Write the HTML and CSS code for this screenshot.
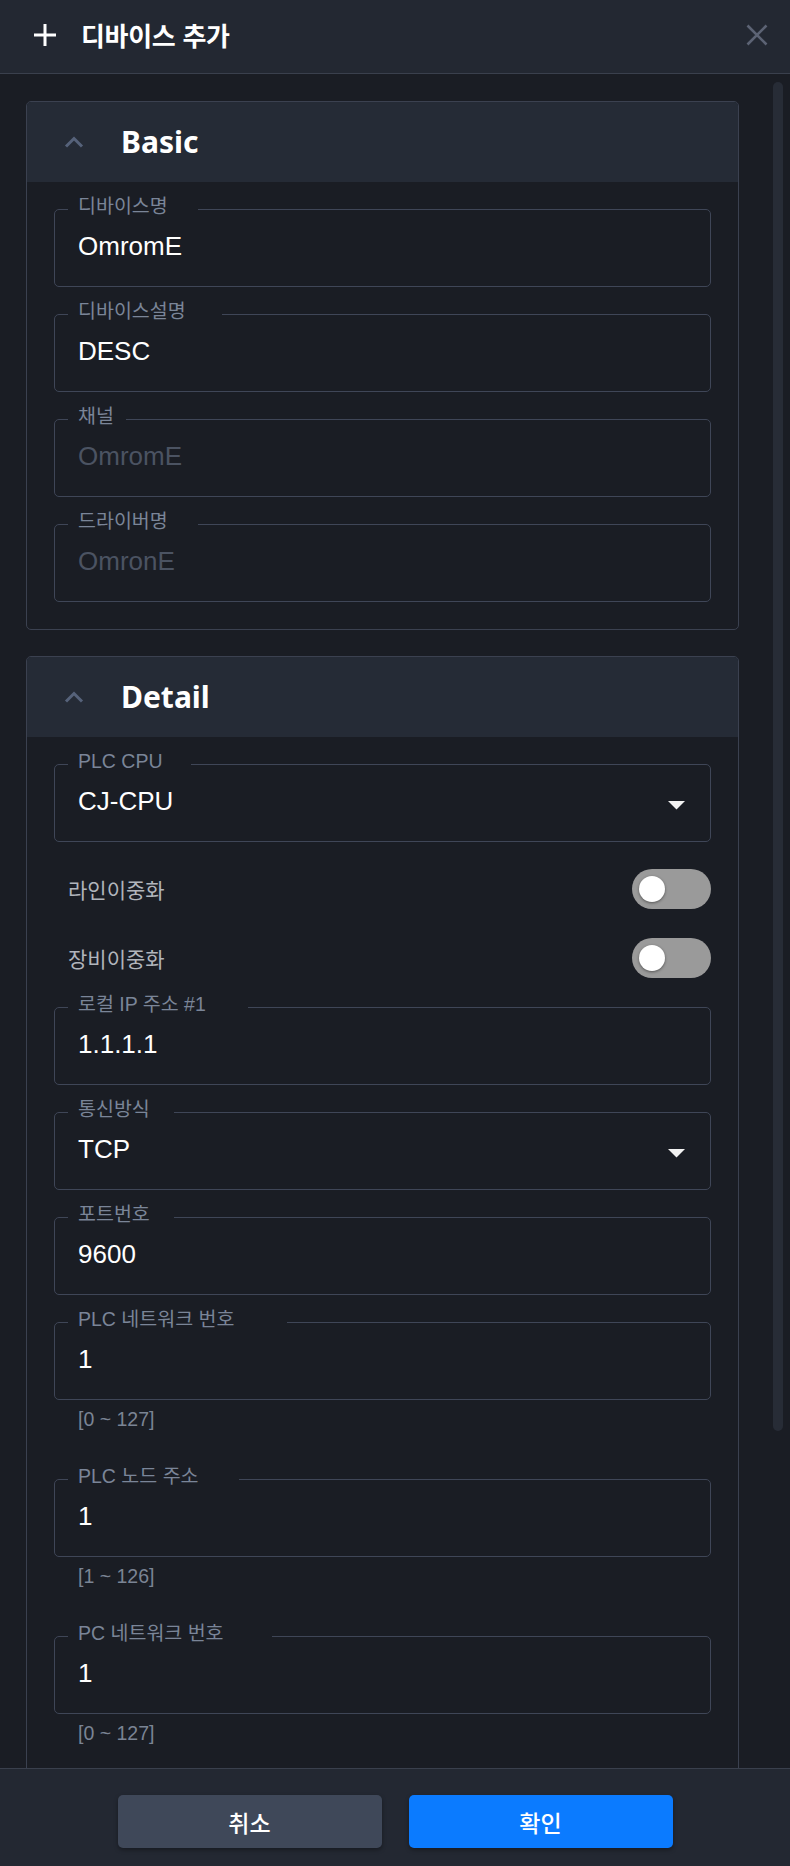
FILE: index.html
```html
<!DOCTYPE html>
<html lang="ko">
<head>
<meta charset="utf-8">
<title>디바이스 추가</title>
<link rel="stylesheet" href="styles.css">
</head>
<body>
<div class="dialog">
  <header class="topbar">
    <svg class="plus" width="22" height="22" viewBox="0 0 22 22"><path d="M11 0V22M0 11H22" stroke="#ffffff" stroke-width="3" fill="none"/></svg>
    <h1 class="title">디바이스 추가</h1>
    <svg class="close" width="22" height="22" viewBox="0 0 22 22"><path d="M1.5 1.5L20.5 20.5M20.5 1.5L1.5 20.5" stroke="#5c6374" stroke-width="2.6" fill="none"/></svg>
  </header>

  <main class="content">
    <section class="card">
      <div class="card-head">
        <svg class="chev" width="20" height="12" viewBox="0 0 20 12"><path d="M2 10.5L10 2.5L18 10.5" stroke="#56627a" stroke-width="3" fill="none"/></svg>
        <h2 class="card-title">Basic</h2>
      </div>
      <div class="card-body">
        <div class="fw">
          <fieldset class="field"><legend><span>디바이스명</span></legend><div class="value">OmromE</div></fieldset>
          <label class="flabel">디바이스명</label>
        </div>
        <div class="fw">
          <fieldset class="field"><legend><span>디바이스설명</span></legend><div class="value">DESC</div></fieldset>
          <label class="flabel">디바이스설명</label>
        </div>
        <div class="fw">
          <fieldset class="field"><legend><span>채널</span></legend><div class="value disabled">OmromE</div></fieldset>
          <label class="flabel">채널</label>
        </div>
        <div class="fw">
          <fieldset class="field"><legend><span>드라이버명</span></legend><div class="value disabled">OmronE</div></fieldset>
          <label class="flabel">드라이버명</label>
        </div>
      </div>
    </section>

    <section class="card">
      <div class="card-head">
        <svg class="chev" width="20" height="12" viewBox="0 0 20 12"><path d="M2 10.5L10 2.5L18 10.5" stroke="#56627a" stroke-width="3" fill="none"/></svg>
        <h2 class="card-title">Detail</h2>
      </div>
      <div class="card-body">
        <div class="fw">
          <fieldset class="field"><legend><span>PLC CPU</span></legend>
            <div class="value select"><span>CJ-CPU</span><svg class="caret" width="17" height="9" viewBox="0 0 17 9"><path d="M0 0H17L8.5 8.5Z" fill="#f2f2f2"/></svg></div>
          </fieldset>
          <label class="flabel">PLC CPU</label>
        </div>
        <div class="trow">
          <span class="tlabel">라인이중화</span>
          <span class="toggle"><span class="knob"></span></span>
        </div>
        <div class="trow">
          <span class="tlabel">장비이중화</span>
          <span class="toggle"><span class="knob"></span></span>
        </div>
        <div class="fw">
          <fieldset class="field"><legend><span>로컬 IP 주소 #1</span></legend><div class="value">1.1.1.1</div></fieldset>
          <label class="flabel">로컬 IP 주소 #1</label>
        </div>
        <div class="fw">
          <fieldset class="field"><legend><span>통신방식</span></legend>
            <div class="value select"><span>TCP</span><svg class="caret" width="17" height="9" viewBox="0 0 17 9"><path d="M0 0H17L8.5 8.5Z" fill="#f2f2f2"/></svg></div>
          </fieldset>
          <label class="flabel">통신방식</label>
        </div>
        <div class="fw">
          <fieldset class="field"><legend><span>포트번호</span></legend><div class="value">9600</div></fieldset>
          <label class="flabel">포트번호</label>
        </div>
        <div class="fw">
          <fieldset class="field"><legend><span>PLC 네트워크 번호</span></legend><div class="value">1</div></fieldset>
          <label class="flabel">PLC 네트워크 번호</label>
          <p class="helper">[0 ~ 127]</p>
        </div>
        <div class="fw">
          <fieldset class="field"><legend><span>PLC 노드 주소</span></legend><div class="value">1</div></fieldset>
          <label class="flabel">PLC 노드 주소</label>
          <p class="helper">[1 ~ 126]</p>
        </div>
        <div class="fw">
          <fieldset class="field"><legend><span>PC 네트워크 번호</span></legend><div class="value">1</div></fieldset>
          <label class="flabel">PC 네트워크 번호</label>
          <p class="helper">[0 ~ 127]</p>
        </div>
      </div>
    </section>
    <div class="thumb"></div>
  </main>

  <footer class="actions">
    <button class="btn cancel">취소</button>
    <button class="btn ok">확인</button>
  </footer>
</div>
</body>
</html>
```

FILE: styles.css
```css
html, body {
  margin: 0;
  padding: 0;
  background: #1a1d24;
}
body {
  width: 790px;
  height: 1866px;
  overflow: hidden;
  font-family: "Liberation Sans", "Noto Sans CJK KR", sans-serif;
}
.dialog {
  display: flex;
  flex-direction: column;
  height: 1866px;
}
.topbar {
  flex: none;
  box-sizing: border-box;
  height: 74px;
  border-bottom: 1px solid #3a404d;
  background: #232832;
  display: flex;
  align-items: center;
  padding: 0 22px 3px 34px;
}
.plus { flex: none; }
.title {
  margin: 0 0 0 25px;
  flex: 1;
  font-family: "Noto Sans CJK KR", sans-serif;
  font-weight: 700;
  font-size: 26px;
  letter-spacing: -0.3px;
  color: #ffffff;
  line-height: 30px;
}
.close { flex: none; }

.content {
  flex: 1;
  position: relative;
  overflow: hidden;
  padding: 27px 51px 0 26px;
  display: flex;
  flex-direction: column;
  gap: 26px;
}
.thumb {
  position: absolute;
  right: 7px;
  top: 8px;
  width: 10px;
  height: 1349px;
  border-radius: 5px;
  background: #272c36;
}
.card {
  flex: none;
  border: 1px solid #3b4150;
  border-radius: 5px;
}
.card-head {
  height: 80px;
  background: #252b36;
  border-radius: 4px 4px 0 0;
  display: flex;
  align-items: center;
  padding-left: 37px;
  gap: 37px;
}
.card-title {
  margin: 0;
  font-family: "Noto Sans", sans-serif;
  font-weight: 700;
  font-size: 30px;
  line-height: 40px;
  color: #ffffff;
}
.card-body {
  padding: 22px 27px 27px;
  display: flex;
  flex-direction: column;
  gap: 22px;
}

.fw {
  position: relative;
}
.field {
  margin: 0;
  padding: 0;
  min-width: 0;
  border: 1px solid #3f4657;
  border-radius: 5px;
}
.field legend {
  margin-left: 13px;
  padding: 0 5px;
  height: 11px;
  font-size: 26px;
  line-height: 11px;
  visibility: hidden;
  white-space: nowrap;
}
.flabel {
  position: absolute;
  left: 24px;
  top: -8px;
  font-size: 19.5px;
  line-height: 20px;
  color: #7a8598;
  white-space: nowrap;
}
.value {
  height: 71px;
  box-sizing: border-box;
  padding: 0 25px 0 23px;
  font-size: 26px;
  line-height: 63px;
  color: #ffffff;
}
.value.disabled {
  color: #4b5362;
}
.value.select {
  display: flex;
  justify-content: space-between;
  align-items: flex-start;
}
.caret {
  margin-top: 31px;
}
.helper {
  margin: 7px 0 21px 24px;
  font-size: 19.5px;
  line-height: 24px;
  color: #7a8494;
}

.trow {
  height: 45px;
  padding: 2px 0 0 14px;
  display: flex;
  align-items: center;
  justify-content: space-between;
}
.tlabel {
  font-size: 21px;
  color: #b1b5bc;
}
.toggle {
  width: 79px;
  height: 40px;
  border-radius: 20px;
  background: #9a9a9a;
  display: flex;
  align-items: center;
  padding-left: 7px;
  box-sizing: border-box;
}
.knob {
  width: 26px;
  height: 26px;
  border-radius: 50%;
  background: #ffffff;
  box-shadow: 0 1px 3px rgba(0, 0, 0, 0.45);
}

.actions {
  flex: none;
  height: 98px;
  box-sizing: border-box;
  border-top: 1px solid #3a404d;
  background: #232832;
  display: flex;
  justify-content: center;
  gap: 27px;
  padding-top: 26px;
}
.btn {
  width: 264px;
  height: 53px;
  border: none;
  border-radius: 5px;
  font-family: "Noto Sans CJK KR", sans-serif;
  font-size: 23px;
  font-weight: 500;
  color: #ffffff;
  box-shadow: 0 2px 4px rgba(0, 0, 0, 0.35);
}
.btn.cancel { background: #3f4859; }
.btn.ok { background: #0b7bff; }
```
